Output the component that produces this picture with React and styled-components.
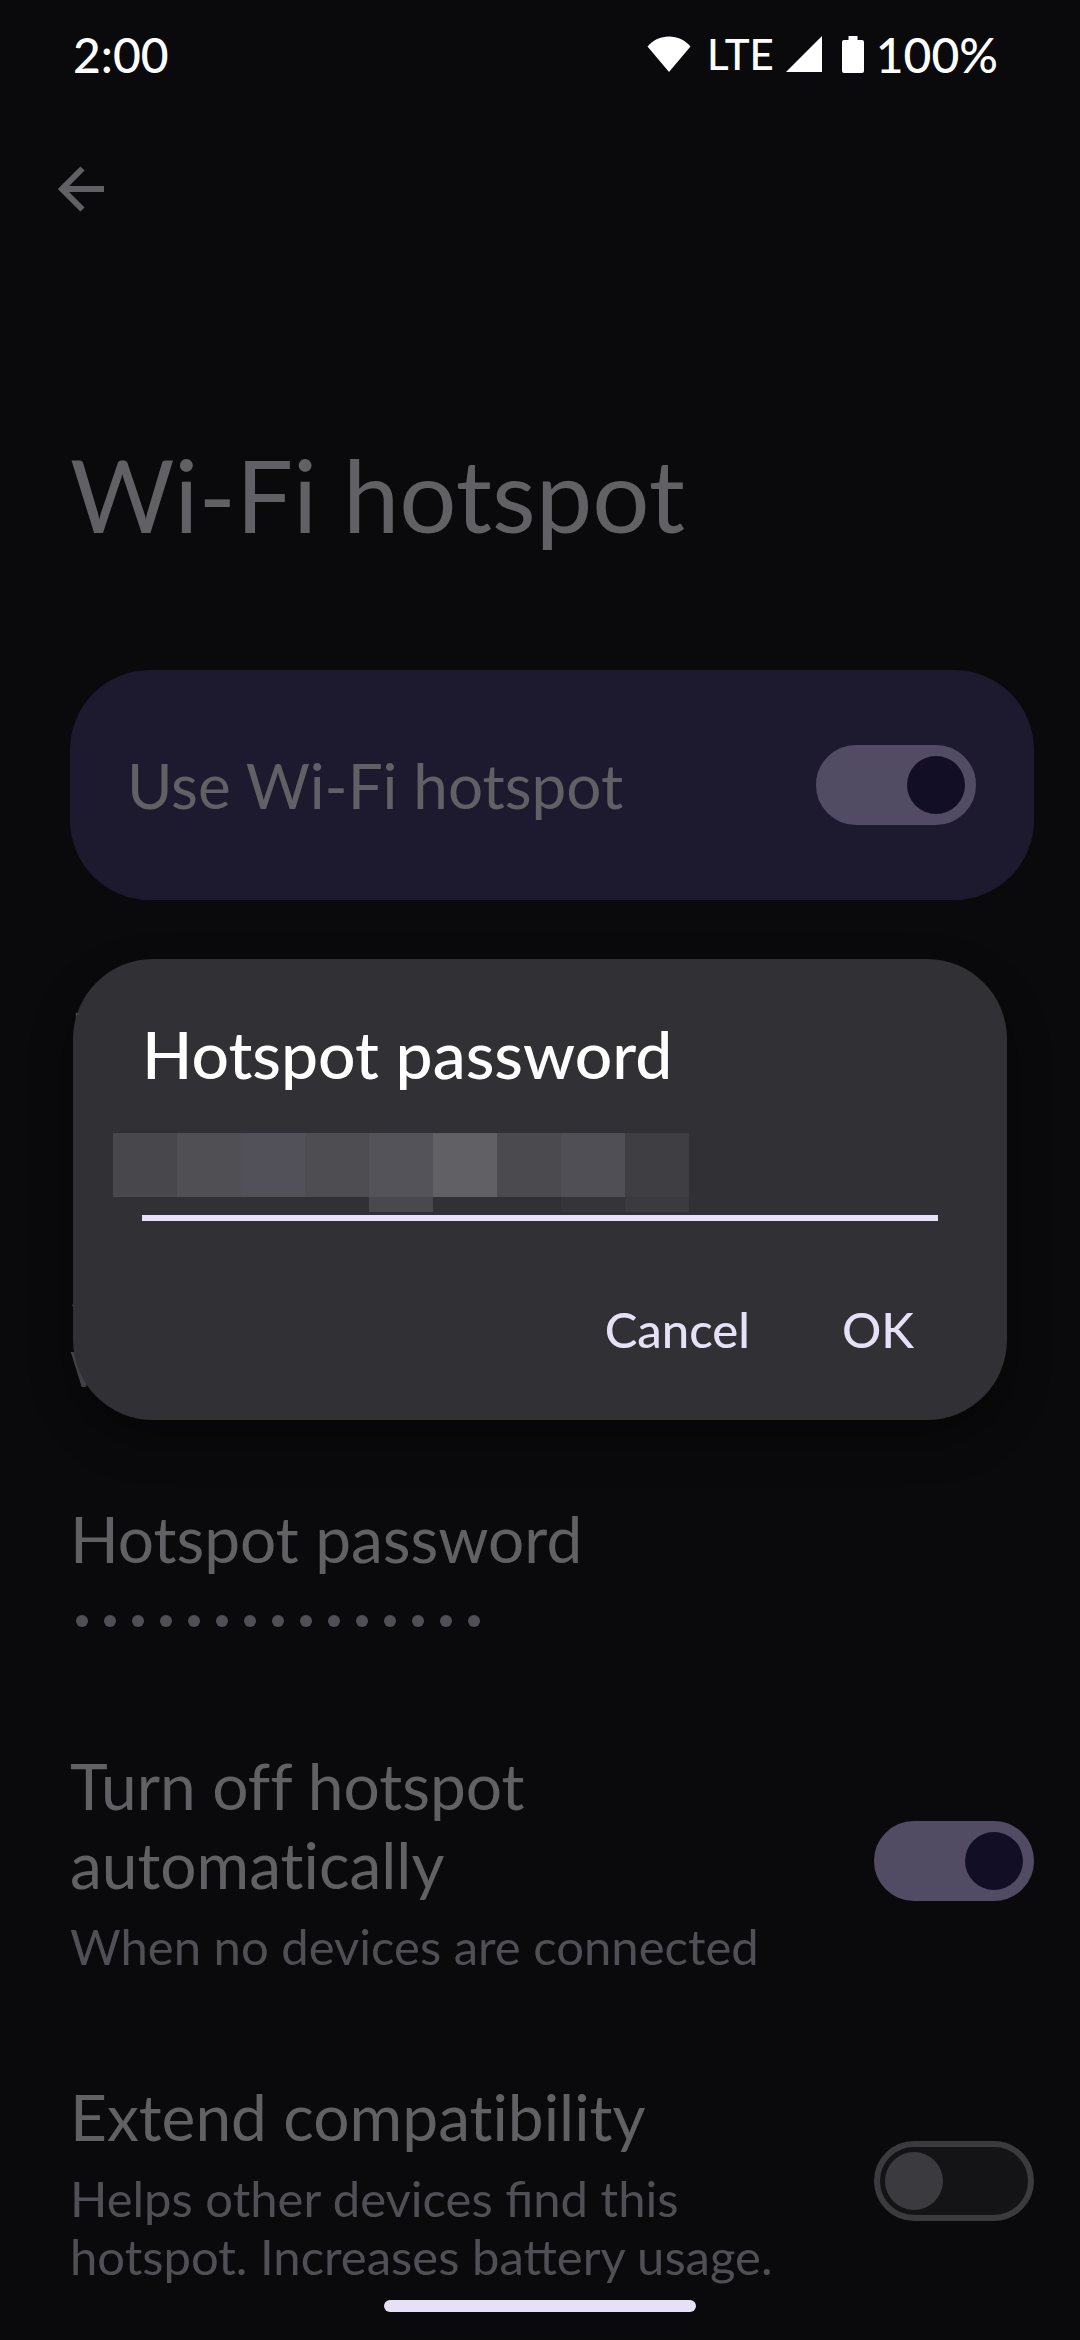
import React, { useState } from "react";
import styled, { createGlobalStyle } from "styled-components";

const GlobalStyle = createGlobalStyle`
  *, *::before, *::after { box-sizing: border-box; }
  body {
    margin: 0;
    background: #0a0a0c;
    color: #616064;
    font-family: Lato, "Open Sans", sans-serif;
  }
`;

const Screen = styled.div`
  min-height: 100vh;
  overflow: hidden;
`;

const StatusBar = styled.header`
  display: flex;
  align-items: center;
  justify-content: space-between;
  height: 108px;
  padding: 0 82px 0 73px;
  color: #ffffff;
  font-size: 48px;
  font-weight: 500;
`;

const StatusIcons = styled.div`
  display: flex;
  align-items: center;
`;

const Network = styled.span`
  margin: 0 12px 0 16px;
  font-size: 42px;
`;

const Battery = styled.span`
  margin-left: 12px;
`;

const StatusIcon = styled.svg`
  display: block;
  fill: #ffffff;
  margin-left: ${(p) => p.$gap || 0}px;
`;

const TopBar = styled.nav`
  display: flex;
  align-items: center;
  height: 162px;
  padding-left: 49px;
`;

const BackButton = styled.button`
  display: flex;
  padding: 0;
  border: 0;
  background: none;
  color: #616064;
`;

const Content = styled.main`
  padding: 0 46px 0 70px;
`;

const PageTitle = styled.h1`
  margin: 162px 0 114px;
  font-size: 101px;
  line-height: 124px;
  font-weight: 400;
`;

const MainSwitchCard = styled.label`
  display: flex;
  align-items: center;
  justify-content: space-between;
  height: 230px;
  margin-bottom: 44px;
  padding: 0 58px 0 57px;
  border-radius: 80px;
  background: #1d1a2f;
  font-size: 62px;
`;

const Toggle = styled.input`
  appearance: none;
  display: flex;
  flex: none;
  align-items: center;
  justify-content: flex-start;
  width: 160px;
  height: 80px;
  margin: 0;
  padding: 0 5px;
  border: 6px solid #3b3a3f;
  border-radius: 40px;
  background: #141416;

  &::before {
    content: "";
    width: 58px;
    height: 58px;
    border-radius: 50%;
    background: #3b3a3f;
  }

  &:checked {
    justify-content: flex-end;
    border-color: #514c64;
    background: #514c64;
  }

  &:checked::before {
    background: #120e26;
  }
`;

const Row = styled.label`
  display: flex;
  align-items: center;
  justify-content: space-between;
  gap: 80px;
  padding: 51px 0;
`;

const RowText = styled.span`
  display: flex;
  flex-direction: column;
  gap: 13px;
`;

const RowTitle = styled.span`
  font-size: 64px;
  line-height: 79px;
  font-variant-ligatures: none;
`;

const RowSummary = styled.span`
  color: #504f55;
  font-size: 49px;
  line-height: 58px;
`;

const Dots = styled.span`
  display: flex;
  gap: 16px;
  padding: 24px 6px 17px;
`;

const Dot = styled.span`
  width: 12px;
  height: 12px;
  border-radius: 50%;
  background: #504f55;
`;

const Overlay = styled.div`
  position: fixed;
  inset: 0;
  display: flex;
  align-items: center;
  padding: 102px 73px 63px;
`;

const Dialog = styled.form`
  flex: 1;
  padding: 55px 69px 46px;
  border-radius: 80px;
  background: #313035;
  box-shadow: 0 20px 40px 4px rgba(0, 0, 0, 0.3);
`;

const DialogTitle = styled.label`
  display: block;
  color: #ffffff;
  font-size: 66px;
  line-height: 79px;
  font-weight: 500;
`;

const Field = styled.div`
  position: relative;
  margin-top: 36px;
`;

const PasswordInput = styled.input`
  display: block;
  width: 100%;
  height: 92px;
  padding: 0 4px;
  border: 0;
  border-bottom: 6px solid #e6e1f6;
  outline: 0;
  background: transparent;
  color: #ffffff;
  font: inherit;
  font-size: 49px;
`;

const Mosaic = styled.div`
  position: absolute;
  top: 4px;
  left: -29px;
  display: grid;
  grid-template-columns: repeat(9, 64px);
  grid-template-rows: 64px 15px;
`;

const Tile = styled.span`
  background: ${(p) => p.$tone};
`;

const Actions = styled.div`
  display: flex;
  justify-content: flex-end;
  gap: 44px;
  margin-top: 63px;
`;

const TextButton = styled.button`
  padding: 0 24px;
  border: 0;
  background: none;
  color: #e6e1f6;
  font: inherit;
  font-size: 49px;
  font-weight: 500;
  line-height: 90px;
`;

const HomeBar = styled.div`
  position: fixed;
  bottom: 28px;
  left: 50%;
  width: 312px;
  height: 12px;
  margin-left: -156px;
  border-radius: 6px;
  background: #e6e1f6;
`;

const tiles = [
  "#48474c", "#504f54", "#525159", "#4e4d52", "#545359", "#616064", "#4b4a4f", "#504f55", "#3f3e42",
  "#313035", "#313035", "#313035", "#313035", "#49484d", "#313035", "#313035", "#35343a", "#3b3a3f",
];

function Setting({ title, summary, children, toggle }) {
  return (
    <Row as={toggle ? "label" : "div"}>
      <RowText>
        <RowTitle>{title}</RowTitle>
        {summary && <RowSummary>{summary}</RowSummary>}
        {children}
      </RowText>
      {toggle}
    </Row>
  );
}

export default function App() {
  const [password, setPassword] = useState("");
  return (
    <Screen>
      <GlobalStyle />
      <StatusBar>
        <span>2:00</span>
        <StatusIcons>
          <StatusIcon width="44" height="36" viewBox="0 0 44 36" aria-hidden="true">
            <path d="M22 36 0.5 10.5C6 4 13.500 0.500 22 0.500S38 4 43.500 10.500Z" />
          </StatusIcon>
          <Network>LTE</Network>
          <StatusIcon width="36" height="36" viewBox="0 0 36 36" aria-hidden="true">
            <path d="M36 0V36H0Z" />
          </StatusIcon>
          <StatusIcon $gap={20} width="22" height="37" viewBox="0 0 22 37" aria-hidden="true">
            <path d="M6.500 0H15.500V4H20A2 2 0 0 1 22 6V35A2 2 0 0 1 20 37H2A2 2 0 0 1 0 35V6A2 2 0 0 1 2 4H6.500Z" />
          </StatusIcon>
          <Battery>100%</Battery>
        </StatusIcons>
      </StatusBar>
      <TopBar>
        <BackButton aria-label="Back">
          <svg width="64" height="64" viewBox="0 0 64 64" fill="none" stroke="currentColor" strokeWidth="6" aria-hidden="true">
            <path d="M55 32H13M33.500 11.500 13 32 33.500 52.500" />
          </svg>
        </BackButton>
      </TopBar>
      <Content>
        <PageTitle>Wi-Fi hotspot</PageTitle>
        <MainSwitchCard>
          Use Wi-Fi hotspot
          <Toggle type="checkbox" role="switch" defaultChecked />
        </MainSwitchCard>
        <Setting title="Hotspot name" summary="Pixel" />
        <Setting title="Security" summary="WPA2/WPA3-Personal" />
        <Setting title="Hotspot password">
          <Dots>
            {Array.from({ length: 15 }, (_, i) => (
              <Dot key={i} />
            ))}
          </Dots>
        </Setting>
        <Setting
          title="Turn off hotspot automatically"
          summary="When no devices are connected"
          toggle={<Toggle type="checkbox" role="switch" defaultChecked />}
        />
        <Setting
          title="Extend compatibility"
          summary="Helps other devices find this hotspot. Increases battery usage."
          toggle={<Toggle type="checkbox" role="switch" />}
        />
      </Content>
      <Overlay>
        <Dialog role="dialog" aria-labelledby="password-title" onSubmit={(e) => e.preventDefault()}>
          <DialogTitle id="password-title" htmlFor="password">Hotspot password</DialogTitle>
          <Field>
            <PasswordInput id="password" value={password} onChange={(e) => setPassword(e.target.value)} />
            <Mosaic aria-hidden="true">
              {tiles.map((tone, i) => (
                <Tile key={i} $tone={tone} />
              ))}
            </Mosaic>
          </Field>
          <Actions>
            <TextButton type="button">Cancel</TextButton>
            <TextButton type="submit">OK</TextButton>
          </Actions>
        </Dialog>
      </Overlay>
      <HomeBar />
    </Screen>
  );
}
